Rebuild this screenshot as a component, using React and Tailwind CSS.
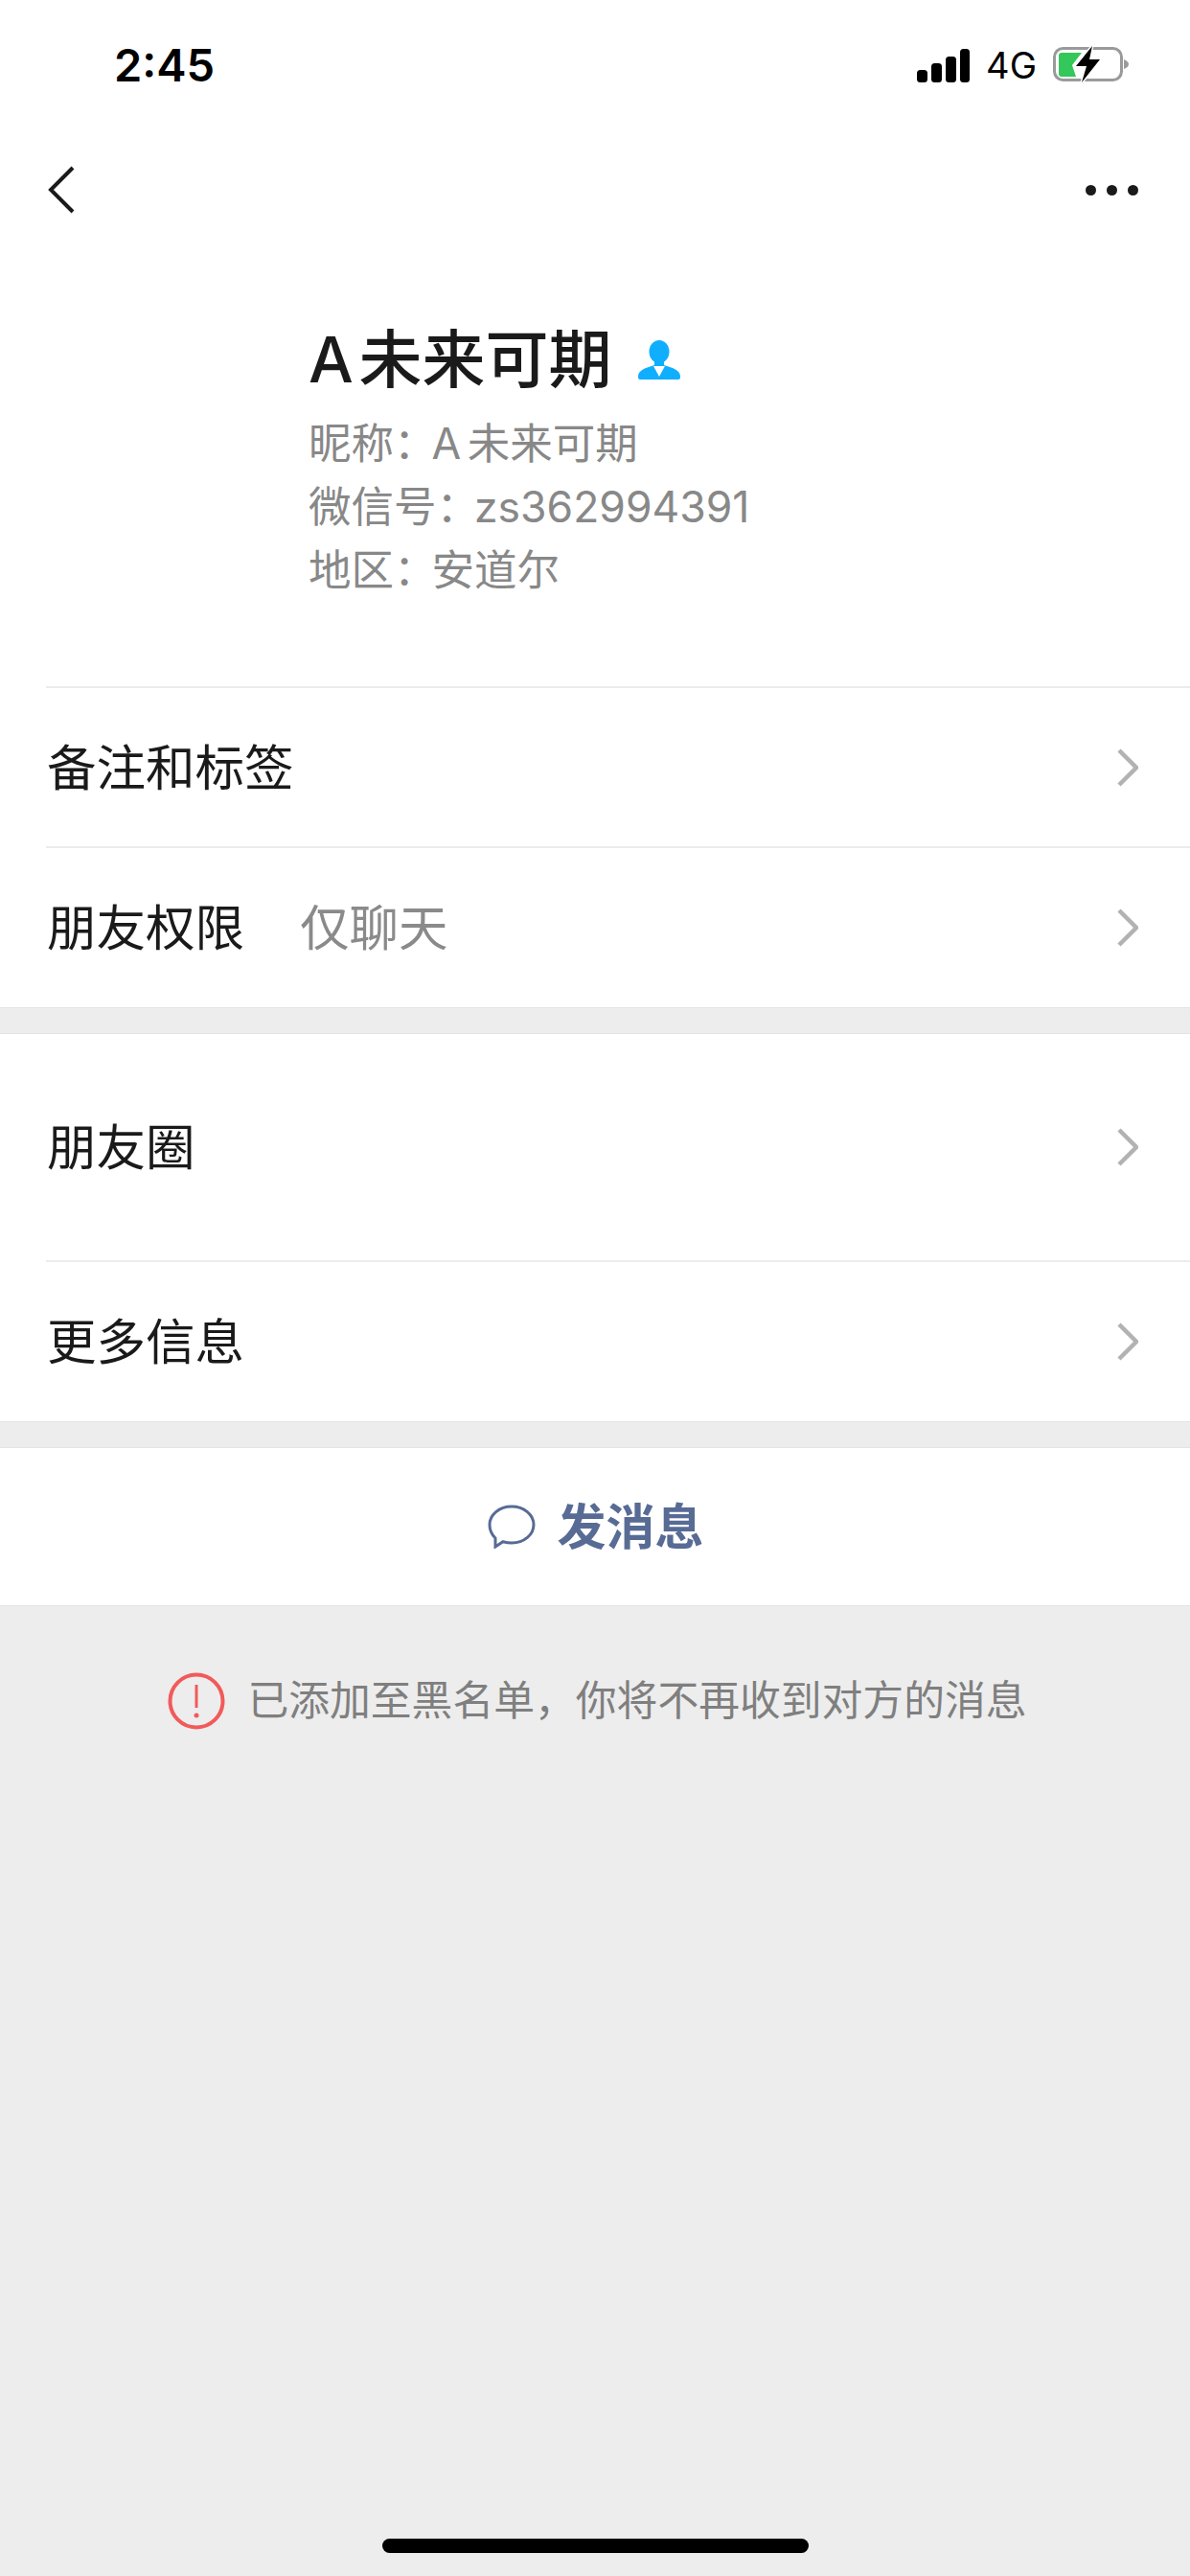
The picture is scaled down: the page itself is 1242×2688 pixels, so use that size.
import React from "react";

const cjk = '"Inter", "Noto Sans CJK SC", "Liberation Sans", sans-serif';

function Chevron() {
  return (
    <svg width="22" height="40" viewBox="0 0 22 40" fill="none" className="shrink-0">
      <path d="M2 2l18 18L2 38" stroke="#b2b2b2" strokeWidth="4.5" />
    </svg>
  );
}

function Row({ label, value, className }) {
  return (
    <div className={`flex items-center pl-[49px] pr-[54px] ${className}`}>
      <span className="pt-[2px] text-[51.5px] leading-none text-[#1a1a1a]">{label}</span>
      {value && <span className="ml-[58px] pt-[2px] text-[51.5px] leading-none text-[#8a8a8a]">{value}</span>}
      <div className="ml-auto flex">
        <Chevron />
      </div>
    </div>
  );
}

function Divider() {
  return <div className="ml-[48px] h-[2px] bg-[#ececec]" />;
}

export default function App() {
  return (
    <div className="w-[1242px] h-[2688px] bg-[#ededed] flex flex-col relative overflow-hidden" style={{ fontFamily: cjk }}>
      <div className="bg-white border-b border-[#e3e3e3]">
        {/* STATUS BAR */}
        <div className="h-[136px] flex items-center pl-[119px] pr-[63px]">
          <span className="text-[47px] font-semibold text-black">2:45</span>
          <div className="ml-auto flex items-center">
            <svg width="55" height="35" viewBox="0 0 55 35" fill="black">
              <rect x="0" y="22" width="11" height="13" rx="3.5" />
              <rect x="15" y="15" width="11" height="20" rx="3.5" />
              <rect x="30" y="8" width="11" height="27" rx="3.5" />
              <rect x="45" y="0" width="10" height="35" rx="3.5" />
            </svg>
            <span className="ml-[17px] text-[38px] leading-none text-black">4G</span>
            <svg width="80" height="40" viewBox="0 0 80 40" className="ml-[17px]" fill="none">
              <rect x="1.5" y="2.5" width="70" height="33" rx="9" stroke="#9a9a9a" strokeWidth="3" />
              <path d="M9 7h21L20 20l4 12H9a3 3 0 01-3-3V10a3 3 0 013-3z" fill="#34c759" />
              <path d="M74 14c3 1 5 3 5 5s-2 4-5 5z" fill="#9a9a9a" />
              <path d="M41 0L24 21h11l-5 17 19-24H38z" fill="black" stroke="white" strokeWidth="3" paintOrder="stroke" />
            </svg>
          </div>
        </div>

        {/* NAV */}
        <div className="h-[124px] flex items-center justify-between pl-[50px] pr-[54px]">
          <svg width="28" height="50" viewBox="0 0 28 50" fill="none">
            <path d="M26 2L3 25l23 23" stroke="#1a1a1a" strokeWidth="4" />
          </svg>
          <div className="flex gap-[11px]">
            <div className="w-[11px] h-[11px] rounded-full bg-[#1a1a1a]" />
            <div className="w-[11px] h-[11px] rounded-full bg-[#1a1a1a]" />
            <div className="w-[11px] h-[11px] rounded-full bg-[#1a1a1a]" />
          </div>
        </div>

        {/* PROFILE */}
        <div className="h-[456px] pl-[322px] pt-[79px]">
          <div className="flex items-center h-[72px]">
            <span className="text-[66px] leading-none font-medium text-[#1a1a1a] [word-spacing:-12px]">A 未来可期</span>
            <svg width="44" height="41" viewBox="0 0 44 41" className="ml-[28px]">
              <ellipse cx="22" cy="12" rx="10.5" ry="12" fill="#10aeff" />
              <path d="M0 38c0-5 4-7 8-9l9-3v-6h10v6l9 3c4 2 8 4 8 9v1a2 2 0 01-2 2H2a2 2 0 01-2-2z" fill="#10aeff" />
              <path d="M16 27h12l-6 11z" fill="white" />
            </svg>
          </div>
          <div className="mt-[19px] text-[44.5px] leading-[66px] text-[#888888]">
            <div className="[word-spacing:-6px]">昵称<span className="tracking-[-5px]">：</span>A 未来可期</div>
            <div>微信号<span className="tracking-[-5px]">：</span>zs362994391</div>
            <div>地区<span className="tracking-[-5px]">：</span>安道尔</div>
          </div>
        </div>

        {/* ROWS */}
        <Divider />
        <Row label="备注和标签" className="h-[165px]" />
        <Divider />
        <Row label="朋友权限" value="仅聊天" className="h-[166px]" />
      </div>

      <div className="mt-[26px] bg-white border-y border-[#e3e3e3]">
        <Row label="朋友圈" className="h-[236px]" />
        <Divider />
        <Row label="更多信息" className="h-[166px]" />
      </div>

      {/* SEND */}
      <div className="mt-[26px] h-[166px] pl-[2px] bg-white border-y border-[#e3e3e3] flex items-center justify-center">
        <svg width="50" height="46" viewBox="0 0 50 46" fill="none" className="mr-[22px]">
          <path d="M25 2c13 0 23 8.500 23 19S38 40 25 40c-3 0-6-.5-9-1.300L8 44v-9c-4-4-6-9-6-14C2 10.500 12 2 25 2z" stroke="#576b95" strokeWidth="3" />
        </svg>
        <span className="text-[51px] leading-none font-bold text-[#576b95]">发消息</span>
      </div>

      {/* BLACKLIST NOTE */}
      <div className="mt-[69px] pl-[5px] flex items-center justify-center">
        <svg width="60" height="60" viewBox="0 0 60 60" fill="none" className="mr-[23px]">
          <circle cx="30" cy="30" r="27.500" stroke="#f25a5a" strokeWidth="4" />
          <path d="M30 13v24" stroke="#f25a5a" strokeWidth="3" />
          <circle cx="30" cy="45" r="2.500" fill="#f25a5a" />
        </svg>
        <span className="text-[42.8px] leading-none text-[#7f7f7f]">已添加至黑名单，你将不再收到对方的消息</span>
      </div>

      {/* HOME INDICATOR */}
      <div className="absolute bottom-[24px] left-[399px] w-[445px] h-[15px] rounded-full bg-black" />
    </div>
  );
}
